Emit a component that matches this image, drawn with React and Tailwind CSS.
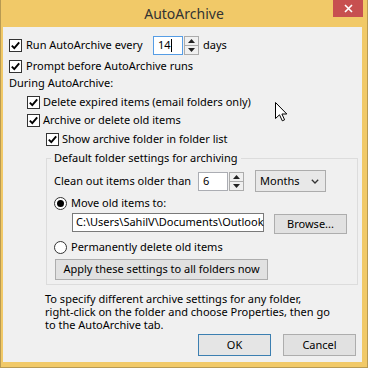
import React from 'react';

// Case à cocher style Windows 8
const Check = () => (
  <span className="w-[13px] h-[13px] shrink-0 border border-[#333333] bg-white flex items-center justify-center">
    <svg width="11" height="11" viewBox="0 0 11 11">
      <path d="M1.8 5.6 L4.3 8.2 L9.2 2.4" stroke="#000" strokeWidth="1.9" fill="none" />
    </svg>
  </span>
);

const Radio = ({ on }) => (
  <span className="w-[13px] h-[13px] shrink-0 rounded-full border border-[#333333] bg-white flex items-center justify-center">
    {on && <span className="w-[7px] h-[7px] rounded-full bg-black" />}
  </span>
);

const Spinner = () => (
  <div className="w-[15px] h-[19px] shrink-0 flex flex-col border border-[#acacac] bg-[#f0f0f0]">
    <div className="flex-1 flex items-center justify-center border-b border-[#acacac]">
      <svg width="7" height="4" viewBox="0 0 7 4"><path d="M0 4 L3.5 0 L7 4 Z" fill="#222" /></svg>
    </div>
    <div className="flex-1 flex items-center justify-center">
      <svg width="7" height="4" viewBox="0 0 7 4"><path d="M0 0 L3.5 4 L7 0 Z" fill="#222" /></svg>
    </div>
  </div>
);

const Button = ({ children, className = '' }) => (
  <div className={`flex items-center justify-center bg-[#e1e1e1] border ${className}`}>
    {children}
  </div>
);

const App = () => {
  return (
    <div className="w-[368px] h-[368px] flex flex-col bg-[#f1c968] border-x border-b border-[#b89a52] pl-[2px] pr-[5px] pb-[5px] font-['Noto_Sans',sans-serif] text-[11px] text-black relative">
      {/* Barre de titre */}
      <div className="h-[27px] shrink-0 grid grid-cols-[1fr_auto_1fr] -ml-[2px] -mr-[5px]">
        <div />
        <div className="flex items-center text-[14px] text-[#333333] pb-[1px]">AutoArchive</div>
        <div className="justify-self-end mr-[4px] w-[30px] h-[17px] bg-[#c75050] flex items-center justify-center">
          <svg width="9" height="9" viewBox="0 0 9 9">
            <path d="M1 1 L8 8 M8 1 L1 8" stroke="#fff" strokeWidth="1.6" />
          </svg>
        </div>
      </div>

      {/* Zone client */}
      <div className="flex-1 bg-[#f0f0f0] flex flex-col">
        <div className="mt-[8px] h-[20px] flex items-center pl-[6px]">
          <Check />
          <span className="ml-[4px] w-[127px] whitespace-nowrap">Run AutoArchive every</span>
          <div className="w-[30px] h-[19px] border border-[#569de5] bg-white flex items-center pl-[4px]">
            <span>14</span>
            <span className="w-[1px] h-[13px] bg-black" />
          </div>
          <div className="ml-[1px]"><Spinner /></div>
          <span className="ml-[4px]">days</span>
        </div>

        <div className="mt-[1px] h-[20px] flex items-center pl-[6px]">
          <Check />
          <span className="ml-[4px]">Prompt before AutoArchive runs</span>
        </div>

        <div className="h-[14px] flex items-center pl-[6px]">During AutoArchive:</div>

        <div className="mt-[3px] h-[18px] flex items-center pl-[24px]">
          <Check />
          <span className="ml-[3px]">Delete expired items (email folders only)</span>
        </div>
        <div className="h-[18px] flex items-center pl-[24px]">
          <Check />
          <span className="ml-[3px]">Archive or delete old items</span>
        </div>
        <div className="mt-[1px] h-[18px] flex items-center pl-[43px]">
          <Check />
          <span className="ml-[3px]">Show archive folder in folder list</span>
        </div>

        {/* Groupe : paramètres par défaut */}
        <fieldset className="ml-[43px] w-[312px] mt-[3px] border border-[#dcdcdc] pl-[7px] pb-[4px]">
          <legend className="-ml-[3px] px-[3px] leading-[14px]">Default folder settings for archiving</legend>

          <div className="mt-[5px] h-[22px] flex items-center">
            <span className="w-[144px] whitespace-nowrap">Clean out items older than</span>
            <div className="w-[30px] h-[19px] border border-[#abadb3] bg-white flex items-center pl-[4px]">6</div>
            <div className="ml-[1px]"><Spinner /></div>
            <div className="ml-[11px] w-[71px] h-[22px] border border-[#acacac] bg-[#e8e8e8] flex items-center justify-between pl-[4px] pr-[6px]">
              <span>Months</span>
              <svg width="8" height="5" viewBox="0 0 8 5">
                <path d="M0.8 0.8 L4 4 L7.2 0.8" stroke="#333" strokeWidth="1.3" fill="none" />
              </svg>
            </div>
          </div>

          <div className="mt-[3px] h-[16px] flex items-center">
            <Radio on />
            <span className="ml-[4px]">Move old items to:</span>
          </div>

          <div className="mt-[2px] h-[21px] flex items-start">
            <div className="ml-[18px] w-[192px] h-[19px] border border-[#7a7a7a] bg-white flex items-center pl-[3px] whitespace-nowrap">
              C:\Users\SahilV\Documents\Outlook
            </div>
            <Button className="ml-[10px] mt-[1px] w-[73px] h-[20px] border-[#adadad]">Browse...</Button>
          </div>

          <div className="mt-[5px] h-[16px] flex items-center">
            <Radio />
            <span className="ml-[4px]">Permanently delete old items</span>
          </div>

          <Button className="mt-[4px] ml-[1px] w-[213px] h-[21px] border-[#adadad]">
            Apply these settings to all folders now
          </Button>
        </fieldset>

        <div className="ml-[42px] mt-[7px] leading-[13px] whitespace-nowrap">
          <div>To specify different archive settings for any folder,</div>
          <div>right-click on the folder and choose Properties, then go</div>
          <div>to the AutoArchive tab.</div>
        </div>

        <div className="mt-[3px] flex justify-end pr-[6px] gap-[12px]">
          <Button className="w-[73px] h-[22px] border-[#3c7fb1] bg-[#e5e5e5]">OK</Button>
          <Button className="w-[73px] h-[22px] border-[#adadad]">Cancel</Button>
        </div>
      </div>

      {/* Curseur de la souris */}
      <svg className="absolute left-[274px] top-[102px]" width="13" height="20" viewBox="0 0 13 20">
        <path d="M0.5 0.5 L0.5 16.5 L4.5 12.8 L7.3 18.8 L9.6 17.8 L6.9 12 L11.8 12 Z" fill="#fff" stroke="#000" strokeWidth="1" />
      </svg>
    </div>
  );
};

export default App;
